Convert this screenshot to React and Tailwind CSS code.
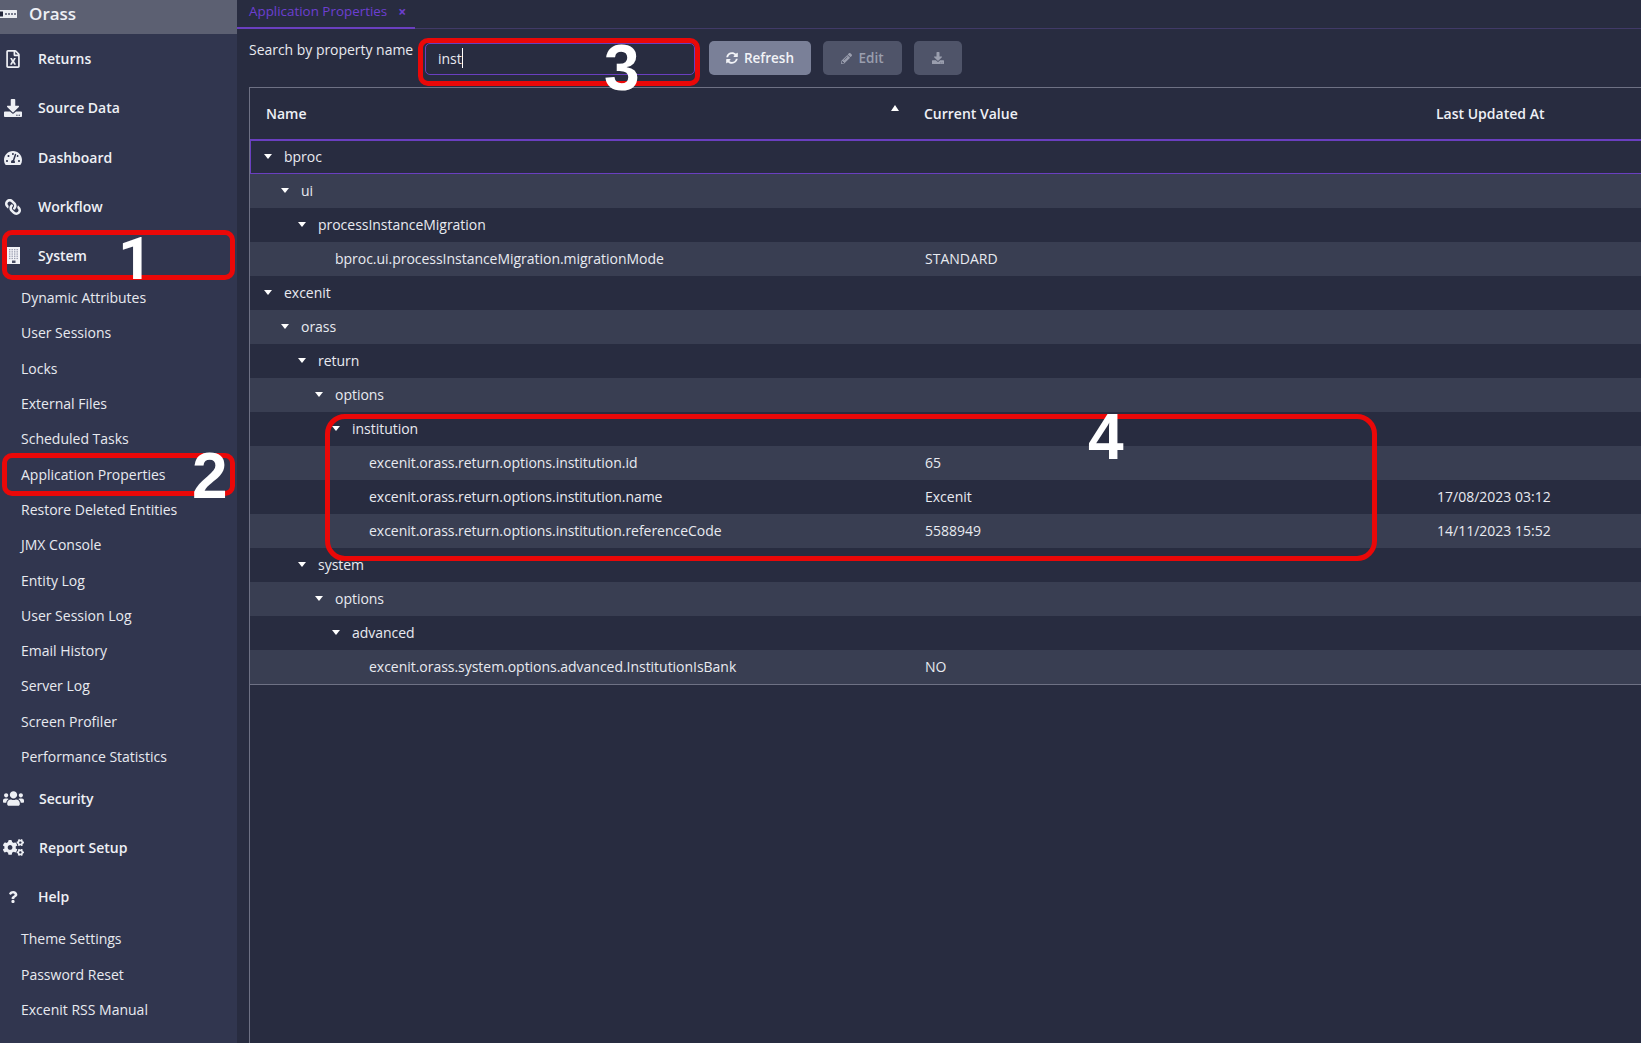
import React from "react";
import { FaRegFileExcel, FaDownload, FaTachometerAlt, FaLink, FaUsers, FaCogs, FaQuestion, FaSyncAlt, FaPencilAlt } from "react-icons/fa";

function BuildingIcon({ className }) {
  const dots = [];
  for (let r = 0; r < 5; r++) for (let c = 0; c < 4; c++) dots.push(<rect key={`${r}-${c}`} x={2 + c * 2.5} y={2 + r * 2.2} width="1.4" height="1.3" fill="#9a9daf" />);
  return (
    <svg className={className} width="13" height="17" viewBox="0 0 13 17">
      <rect x="0" y="0" width="13" height="17" fill="#f2f3f7" />
      {dots}
      <rect x="5" y="13.5" width="3.5" height="2.5" fill="#4a4e64" />
    </svg>
  );
}

function TopItem({ icon: Icon, label, textClass = "ml-[16px]", iconClass = "text-[18px]", rowClass = "h-[49px]" }) {
  return (
    <div className={`flex shrink-0 items-center pl-[4px] text-[14px] font-semibold text-[#eef0f5] ${rowClass}`}>
      <span className="flex w-[18px] justify-center"><Icon className={iconClass} /></span>
      <span className={textClass}>{label}</span>
    </div>
  );
}

function SubItem({ label }) {
  return <div className="flex h-[35.3px] shrink-0 items-center pl-[21px] text-[14px] text-[#e8eaf0]">{label}</div>;
}

const rows = [
  { level: 0, caret: true, name: "bproc", selected: true },
  { level: 1, caret: true, name: "ui" },
  { level: 2, caret: true, name: "processInstanceMigration" },
  { level: 3, name: "bproc.ui.processInstanceMigration.migrationMode", value: "STANDARD" },
  { level: 0, caret: true, name: "excenit" },
  { level: 1, caret: true, name: "orass" },
  { level: 2, caret: true, name: "return" },
  { level: 3, caret: true, name: "options" },
  { level: 4, caret: true, name: "institution" },
  { level: 5, name: "excenit.orass.return.options.institution.id", value: "65" },
  { level: 5, name: "excenit.orass.return.options.institution.name", value: "Excenit", date: "17/08/2023 03:12" },
  { level: 5, name: "excenit.orass.return.options.institution.referenceCode", value: "5588949", date: "14/11/2023 15:52" },
  { level: 2, caret: true, name: "system" },
  { level: 3, caret: true, name: "options" },
  { level: 4, caret: true, name: "advanced" },
  { level: 5, name: "excenit.orass.system.options.advanced.InstitutionIsBank", value: "NO" },
];

function TreeRow({ r, striped }) {
  const padClass = r.selected ? "pl-[34px]" : ["pl-[35px]", "pl-[52px]", "pl-[69px]", r.caret ? "pl-[86px]" : "pl-[85px]", "pl-[103px]", "pl-[119px]"][r.level];
  return (
    <div className={`flex h-[34px] shrink-0 items-center pb-[2px] text-[14px] text-[#e8eaf0] ${striped ? "bg-[#393e52]" : ""} ${r.selected ? "border-y border-l border-[#6a3fc0]" : ""}`}>
      <div className={`relative flex w-[675px] shrink-0 items-center tracking-[-0.03px] ${padClass}`}>
        {r.caret && <span className="mr-[12px] ml-[-21px] h-0 w-0 border-x-[4.5px] border-t-[5px] border-x-transparent border-t-white" />}
        {r.name}
      </div>
      <div className="w-[512px] shrink-0">{r.value}</div>
      <div>{r.date}</div>
    </div>
  );
}

function ServerIcon() {
  return (
    <svg width="18" height="8" viewBox="0 0 18 8" fill="none">
      <rect x="-2" y="0" width="19" height="8" rx="0.5" fill="#eceef2" />
      <rect x="0" y="1.5" width="3" height="5" fill="#22263a" />
      <rect x="5" y="3" width="2" height="2" fill="#777b8c" />
      <rect x="8" y="3" width="2" height="2" fill="#777b8c" />
      <rect x="11" y="3" width="2" height="2" fill="#777b8c" />
      <rect x="14" y="3" width="2" height="2" fill="#777b8c" />
    </svg>
  );
}

function Mark({ className, n, numClass }) {
  return (
    <>
      <div className={`pointer-events-none absolute border-[#ea0808] ${className}`} />
      <div className={`pointer-events-none absolute font-bold leading-none text-white ${numClass}`}>{n}</div>
    </>
  );
}

function FlippedLink({ className }) {
  return <FaLink className={`-scale-x-100 ${className}`} />;
}

export default function App() {
  return (
    <div className="relative flex h-[1043px] w-[1641px] overflow-hidden bg-[#282c40] font-['Open_Sans','Noto_Sans',sans-serif]">
      <aside className="flex w-[237px] shrink-0 flex-col bg-[#31364f]">
        <div className="flex h-[34px] shrink-0 items-center bg-[#5c6072] pb-[6px] text-[17px] font-semibold text-[#eef0f5]">
          <ServerIcon />
          <span className="ml-[11px]">Orass</span>
        </div>
        <TopItem icon={FaRegFileExcel} label="Returns" />
        <TopItem icon={FaDownload} label="Source Data" />
        <TopItem icon={FaTachometerAlt} label="Dashboard" rowClass="h-[51px]" />
        <TopItem icon={FlippedLink} label="Workflow" iconClass="text-[16px]" rowClass="h-[47.8px]" />
        <TopItem icon={BuildingIcon} label="System" rowClass="h-[49.2px]" />
        {["Dynamic Attributes", "User Sessions", "Locks", "External Files", "Scheduled Tasks", "Application Properties", "Restore Deleted Entities", "JMX Console", "Entity Log", "User Session Log", "Email History", "Server Log", "Screen Profiler", "Performance Statistics"].map((s) => <SubItem key={s} label={s} />)}
        <TopItem icon={FaUsers} label="Security" textClass="ml-[17px]" iconClass="text-[21px] shrink-0" />
        <TopItem icon={FaCogs} label="Report Setup" textClass="ml-[17px]" iconClass="text-[21px] shrink-0" />
        <TopItem icon={FaQuestion} label="Help" iconClass="text-[12px]" />
        <SubItem label="Theme Settings" />
        <SubItem label="Password Reset" />
        <SubItem label="Excenit RSS Manual" />
      </aside>

      <main className="flex min-w-0 flex-1 flex-col">
        <div className="flex h-[29px] shrink-0 border-b border-[#413a68]">
          <div className="flex h-[29px] w-[178px] items-start border-b-2 border-[#6a3fc0] pl-[12px] pt-[1px] text-[13.4px] font-medium text-[#6d3fd0]">
            Application Properties
            <span className="ml-[11px] mt-[2px] text-[14px] font-bold leading-[18px]">×</span>
          </div>
        </div>

        <div className="flex h-[58px] shrink-0 pl-[12px]">
          <div className="mt-[11px] w-[176px] text-[14px] leading-[20px] tracking-[-0.03px] text-[#e8eaf0]">Search by property name</div>
          <div className="mt-[14px] flex h-[32px] w-[270px] items-center rounded-[5px] border border-[#6a3fc0] pb-[2px] pl-[12px] text-[14px] text-[#e8eaf0]">
            inst<span className="h-[20px] w-px bg-white" />
          </div>
          <button className="ml-[14px] mt-[12px] flex h-[34px] w-[102px] items-center justify-center gap-[6px] rounded-[5px] bg-[#7a8098] text-[13.5px] font-semibold text-[#f2f3f7]">
            <FaSyncAlt className="text-[12px]" />Refresh
          </button>
          <button className="ml-[12px] mt-[12px] flex h-[34px] w-[79px] items-center justify-center gap-[6px] rounded-[5px] bg-[#4f5469] text-[13.5px] font-semibold text-[#9a9eae]">
            <FaPencilAlt className="text-[11px]" />Edit
          </button>
          <button className="ml-[12px] mt-[12px] flex h-[34px] w-[48px] items-center justify-center rounded-[5px] bg-[#4f5469] text-[#9a9eae]">
            <FaDownload className="text-[12px]" />
          </button>
        </div>

        <div className="ml-[12px] flex min-h-0 flex-1 flex-col border-l border-t border-[#6e7184]">
          <div className="flex h-[52px] shrink-0 items-center border-b border-[#6a3fc0] text-[14px] font-semibold text-[#eef0f5]">
            <div className="relative w-[674px] shrink-0 pl-[16px]">
              Name
              <span className="absolute left-[641px] top-[2px] h-0 w-0 border-x-[4.5px] border-b-[6px] border-x-transparent border-b-white" />
            </div>
            <div className="w-[512px] shrink-0">Current Value</div>
            <div>Last Updated At</div>
          </div>
          <div className="flex flex-col border-b border-[#6e7184]">
            {rows.map((r, i) => <TreeRow key={i} r={r} striped={i % 2 === 1} />)}
          </div>
        </div>
      </main>

      <Mark className="left-[2px] top-[230px] h-[50px] w-[233px] rounded-[10px] border-[5px]" n="1" numClass="left-[118px] top-[229px] font-['Roboto',sans-serif] text-[60px]" />
      <Mark className="left-[2px] top-[453px] h-[43px] w-[233px] rounded-[10px] border-[5px]" n="2" numClass="left-[192px] top-[444px] font-['Liberation_Sans',sans-serif] text-[64px]" />
      <Mark className="left-[418px] top-[38px] h-[48px] w-[282px] rounded-[10px] border-[5px]" n="3" numClass="left-[604px] top-[36px] font-['Liberation_Sans',sans-serif] text-[64px]" />
      <Mark className="left-[325px] top-[414px] h-[147px] w-[1052px] rounded-[20px] border-[5px]" n="4" numClass="left-[1088px] top-[405px] font-['Liberation_Sans',sans-serif] text-[64px]" />
    </div>
  );
}
